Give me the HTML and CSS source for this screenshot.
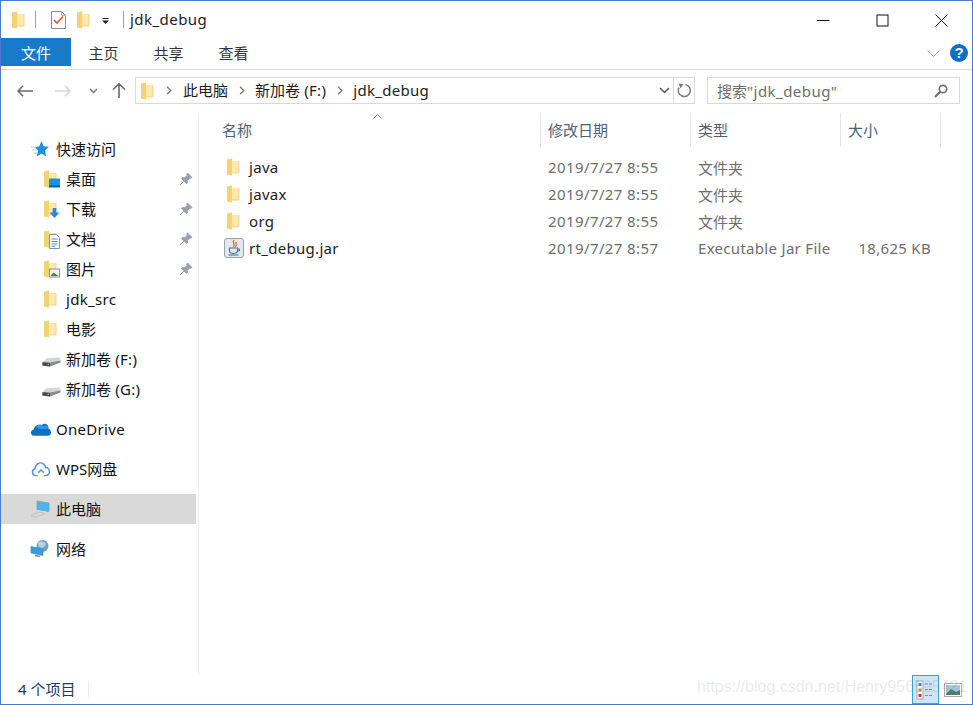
FILE: index.html
```html
<!DOCTYPE html>
<html lang="zh-CN">
<head>
<meta charset="utf-8">
<title>jdk_debug</title>
<link rel="stylesheet" href="styles.css">
</head>
<body>
<svg class="defs" width="0" height="0" aria-hidden="true">
  <defs>
    <symbol id="folder" viewBox="0 0 13 18">
      <path d="M0 1.5 L5 0.5 L5 3 L12 3 L12 15 L5 15 L5 17.5 L0 16.5 Z" fill="#fde9ae"/>
      <path d="M0 1.5 L5 0.5 L5 17.5 L0 16.5 Z" fill="#f5d272"/>
      <path d="M5 15 L12 15 L12 3" fill="none" stroke="#eccb72" stroke-width="0.8"/>
    </symbol>
    <symbol id="pin" viewBox="0 0 14 14">
      <path d="M8.5 1 L13 5.5 L11.7 6.3 L10.8 6 L8.3 8.5 L8.5 10.8 L7.4 11.5 L2.6 6.6 L3.4 5.5 L5.7 5.8 L8.2 3.3 L7.8 2.2 Z M4.8 9.2 L1 13" fill="#98a2ab" stroke="#98a2ab"/>
    </symbol>
    <symbol id="drive" viewBox="0 0 19 10">
      <path d="M0.5 5 L5 1 L18 0.5 L18.5 4 L8 9 L1 9 Z" fill="#d6d6d6"/>
      <path d="M0.5 5 L8 5.6 L18.5 3.5 L18.5 5.5 L8 9.5 L0.5 8.5 Z" fill="#8a8a8a"/>
      <path d="M0.5 5.3 L8 6 L8 9.5 L0.5 8.5 Z" fill="#4b4b4b"/>
      <rect x="5.5" y="6.8" width="1.6" height="1.2" fill="#5ec45e"/>
    </symbol>
  </defs>
</svg>
<div class="window">
  <header class="titlebar">
    <svg class="ico folder-sm qa-first"><use href="#folder"/></svg>
    <span class="vsep sep-a"></span>
    <svg class="ico check" viewBox="0 0 15 18">
      <path d="M0.5 0.5 H10.5 L14.5 4.5 V17.5 H0.5 Z" fill="#fff" stroke="#8c8c8c"/>
      <path d="M10.5 0.5 V4.5 H14.5" fill="none" stroke="#b5b5b5"/>
      <path d="M3 9 L6 12 L12 5.5" fill="none" stroke="#e4572a" stroke-width="1.6"/>
    </svg>
    <svg class="ico folder-sm qa-third"><use href="#folder"/></svg>
    <svg class="ico qa-drop" viewBox="0 0 7 6"><rect x="0.5" width="6" height="1" fill="#222"/><path d="M0 2.5 H7 L3.5 6 Z" fill="#222"/></svg>
    <span class="vsep sep-b"></span>
    <span class="wintitle">jdk_debug</span>
    <div class="controls">
      <svg class="ico ctl" viewBox="0 0 13 13"><path d="M0 6.5 H12.5" stroke="#111" fill="none"/></svg>
      <svg class="ico ctl" viewBox="0 0 13 13"><rect x="1" y="1" width="11" height="11" fill="none" stroke="#111"/></svg>
      <svg class="ico ctl" viewBox="0 0 13 13"><path d="M0.5 0.5 L12.5 12.5 M12.5 0.5 L0.5 12.5" stroke="#111" fill="none"/></svg>
    </div>
  </header>

  <nav class="ribbon">
    <span class="tab tab-file">文件</span>
    <span class="tab">主页</span>
    <span class="tab">共享</span>
    <span class="tab">查看</span>
    <svg class="ico rib-chev" viewBox="0 0 13 7"><path d="M0.5 0.5 L6.5 6.5 L12.5 0.5" fill="none" stroke="#b4b4b4"/></svg>
    <span class="help">?</span>
  </nav>

  <div class="addressrow">
    <div class="navbtns">
      <svg class="ico nav-back" viewBox="0 0 16 12"><path d="M6 0.8 L1 6 L6 11.2 M1 6 H16" fill="none" stroke="#6a6a6a" stroke-width="1.6"/></svg>
      <svg class="ico nav-fwd" viewBox="0 0 16 12"><path d="M10 0.8 L15 6 L10 11.2 M15 6 H0" fill="none" stroke="#d6d6d6" stroke-width="1.6"/></svg>
      <svg class="ico nav-down" viewBox="0 0 9 6"><path d="M1 1 L4.5 4.5 L8 1" fill="none" stroke="#777" stroke-width="1.5"/></svg>
      <svg class="ico nav-up" viewBox="0 0 14 15"><path d="M1 6.5 L7 0.8 L13 6.5 M7 1 V15" fill="none" stroke="#6a6a6a" stroke-width="1.6"/></svg>
    </div>
    <div class="addressbox">
      <div class="crumbs">
        <svg class="ico folder-sm"><use href="#folder"/></svg>
        <svg class="ico crumb-sep" viewBox="0 0 6 9"><path d="M1 0.8 L4.8 4.5 L1 8.2" fill="none" stroke="#777" stroke-width="1.3"/></svg>
        <span class="crumb">此电脑</span>
        <svg class="ico crumb-sep" viewBox="0 0 6 9"><path d="M1 0.8 L4.8 4.5 L1 8.2" fill="none" stroke="#777" stroke-width="1.3"/></svg>
        <span class="crumb">新加卷<span class="lat"> (F:)</span></span>
        <svg class="ico crumb-sep" viewBox="0 0 6 9"><path d="M1 0.8 L4.8 4.5 L1 8.2" fill="none" stroke="#777" stroke-width="1.3"/></svg>
        <span class="crumb lat">jdk_debug</span>
      </div>
      <span class="addr-drop"><svg class="ico addr-chev" viewBox="0 0 11 7"><path d="M1 1 L5.5 5.5 L10 1" fill="none" stroke="#555" stroke-width="1.5"/></svg></span>
      <span class="addr-refresh"><svg class="ico refresh" viewBox="0 0 15 15"><path d="M4 2.6 A6 6 0 1 0 11 2.6" fill="none" stroke="#7c7c7c" stroke-width="1.5" transform="rotate(-25 7.5 8)"/><path d="M1.5 0.5 L6.5 1 L3.5 5.5 Z" fill="#7c7c7c"/></svg></span>
    </div>
    <div class="searchbox">
      <span class="search-text">搜索<span class="lat-wide">"jdk_debug"</span></span>
      <svg class="ico search-ico" viewBox="0 0 14 14"><circle cx="9" cy="5" r="3.7" fill="none" stroke="#6e6e6e" stroke-width="1.7"/><path d="M6.2 7.8 L1 13" stroke="#6e6e6e" stroke-width="2" fill="none"/></svg>
    </div>
  </div>

  <div class="body">
    <aside class="sidebar">
      <ul class="tree">
        <li class="item lvl1">
          <svg class="ico nav-ico" viewBox="0 0 18 18"><path d="M10.5 1 L12.6 6.3 L18 6.8 L14 10.5 L15.2 16.5 L10.5 13.4 L5.8 16.5 L7 10.5 L4 7.5 L8.3 6.3 Z" fill="#1f8fe0"/><path d="M0 7 H5 M1 10 H6 M2 13 H6" stroke="#a8d6f5" fill="none"/></svg>
          <span>快速访问</span>
        </li>
        <li class="item lvl2">
          <span class="sub-ico"><svg class="ico folder-sm"><use href="#folder"/></svg><svg class="ico badge" viewBox="0 0 11 9"><rect width="11" height="8" fill="#1f8fe0"/><rect y="7" width="11" height="2" fill="#0d5fa8"/></svg></span>
          <span class="grow">桌面</span><svg class="ico pin"><use href="#pin"/></svg>
        </li>
        <li class="item lvl2">
          <span class="sub-ico"><svg class="ico folder-sm"><use href="#folder"/></svg><svg class="ico badge" viewBox="0 0 11 11"><path d="M3.5 0 H7.5 V5 H11 L5.5 11 L0 5 H3.5 Z" fill="#2f86d6"/></svg></span>
          <span class="grow">下载</span><svg class="ico pin"><use href="#pin"/></svg>
        </li>
        <li class="item lvl2">
          <span class="sub-ico"><svg class="ico folder-sm"><use href="#folder"/></svg><svg class="ico badge doc" viewBox="0 0 11 15"><path d="M0.5 0.5 H7.5 L10.5 3.5 V14.5 H0.5 Z" fill="#fff" stroke="#8f8f8f"/><path d="M2.5 5 H8.5 M2.5 7.5 H8.5 M2.5 10 H8.5 M2.5 12.3 H6" stroke="#3f8fd0"/></svg></span>
          <span class="grow">文档</span><svg class="ico pin"><use href="#pin"/></svg>
        </li>
        <li class="item lvl2">
          <span class="sub-ico"><svg class="ico folder-sm"><use href="#folder"/></svg><svg class="ico badge" viewBox="0 0 11 9"><rect x="0.5" y="0.5" width="10" height="8" fill="#eef4f8" stroke="#8f8f8f"/><path d="M1.5 7.5 L4.5 4 L9.5 7.5 Z" fill="#4f7d5a"/></svg></span>
          <span class="grow">图片</span><svg class="ico pin"><use href="#pin"/></svg>
        </li>
        <li class="item lvl2">
          <span class="sub-ico"><svg class="ico folder-sm"><use href="#folder"/></svg></span>
          <span class="grow latin-row lat">jdk_src</span>
        </li>
        <li class="item lvl2">
          <span class="sub-ico"><svg class="ico folder-sm"><use href="#folder"/></svg></span>
          <span class="grow">电影</span>
        </li>
        <li class="item lvl2">
          <span class="sub-ico"><svg class="ico drive"><use href="#drive"/></svg></span>
          <span class="grow">新加卷<span class="lat"> (F:)</span></span>
        </li>
        <li class="item lvl2">
          <span class="sub-ico"><svg class="ico drive"><use href="#drive"/></svg></span>
          <span class="grow">新加卷<span class="lat"> (G:)</span></span>
        </li>
        <li class="item lvl1 gap">
          <svg class="ico nav-ico wide" viewBox="0 0 21 14"><path d="M4 13.5 C0.5 13.5 -0.5 8.5 3.5 7.5 C4.5 3 9 2 11 4 C13 0.5 18 2 17.5 6.5 C20.5 7 21.5 13.5 17 13.5 Z" fill="#0f6fc6"/><path d="M6 5 C8 2 11 2 12.5 4.5 C15 3 17.5 4.5 17.5 6.5 L9 7 Z" fill="#2f9be8"/></svg>
          <span class="latin-row lat">OneDrive</span>
        </li>
        <li class="item lvl1 gap">
          <svg class="ico nav-ico wide" viewBox="0 0 21 17"><path d="M5 15.5 C1 15.5 0 9.5 4 8.5 C4.5 3 9.5 0.5 13 3 C15.5 4.5 15.5 6 15.5 7 C20 6.5 21.5 15.5 15.5 15.5 H13.5 M5 15.5 H7 M7.5 12.5 L10.5 9.5 L13.5 12.5" fill="none" stroke="#4f8fe8" stroke-width="1.5"/></svg>
          <span>WPS网盘</span>
        </li>
        <li class="item lvl1 gap selected">
          <svg class="ico nav-ico" viewBox="0 0 20 18"><path d="M7 1 L19 3 V11.5 L7 9.5 Z" fill="#49b8ef" stroke="#7b99ad" stroke-width="0.7"/><path d="M1 15.5 L9 12 L15 13.5 L6 17.5 Z" fill="none" stroke="#bbb" stroke-width="0.8"/></svg>
          <span>此电脑</span>
        </li>
        <li class="item lvl1 gap">
          <svg class="ico nav-ico" viewBox="0 0 20 18"><circle cx="12.5" cy="6" r="6" fill="#6f9fc2"/><path d="M8 3 C10 1 14 1 16 4 L13 8 L9 7 Z" fill="#b6d4e6"/><path d="M1 6.5 L13 9 V15.5 L1 13 Z" fill="#2f9fe0" stroke="#5c8aa6" stroke-width="0.7"/><path d="M5 15.5 L10 16.5" stroke="#8a8a8a" stroke-width="1.4"/></svg>
          <span>网络</span>
        </li>
      </ul>
    </aside>

    <main class="content">
      <div class="columns">
        <span class="col col-name">名称<svg class="ico sort" viewBox="0 0 9 5"><path d="M0.5 4.5 L4.5 0.5 L8.5 4.5" fill="none" stroke="#8a8a8a"/></svg></span>
        <span class="col col-date">修改日期</span>
        <span class="col col-type">类型</span>
        <span class="col col-size">大小</span>
      </div>
      <div class="files">
        <div class="file">
          <span class="fname"><svg class="ico folder-sm"><use href="#folder"/></svg><span class="lat">java</span></span>
          <span class="fdate">2019/7/27 8:55</span><span class="ftype">文件夹</span><span class="fsize"></span>
        </div>
        <div class="file">
          <span class="fname"><svg class="ico folder-sm"><use href="#folder"/></svg><span class="lat">javax</span></span>
          <span class="fdate">2019/7/27 8:55</span><span class="ftype">文件夹</span><span class="fsize"></span>
        </div>
        <div class="file">
          <span class="fname"><svg class="ico folder-sm"><use href="#folder"/></svg><span class="lat">org</span></span>
          <span class="fdate">2019/7/27 8:55</span><span class="ftype">文件夹</span><span class="fsize"></span>
        </div>
        <div class="file">
          <span class="fname"><svg class="ico jar" viewBox="0 0 20 20"><rect x="0.5" y="0.5" width="19" height="19" rx="2.5" fill="#e4e8ec" stroke="#9aa3ab"/><path d="M10 2 C7.5 5 12 6 9.5 9 M12.5 4 C11 6 13.5 6.5 11.5 9" fill="none" stroke="#e0662a" stroke-width="1.3"/><path d="M5.5 10 H13.5 V13 C13.5 15 11.5 15.5 9.5 15.5 C7.5 15.5 5.5 15 5.5 13 Z" fill="none" stroke="#50718c" stroke-width="1.1"/><path d="M13.5 11 H15.5 V13 H13.5 M4.5 17 H14.5" fill="none" stroke="#50718c"/></svg><span class="lat">rt_debug.jar</span></span>
          <span class="fdate">2019/7/27 8:57</span><span class="ftype lat">Executable Jar File</span><span class="fsize lat">18,625 KB</span>
        </div>
      </div>
    </main>
  </div>

  <footer class="statusbar">
    <span class="count">4 个项目</span>
    <span class="viewbtn active"><svg class="ico" width="19" height="20" viewBox="0 0 19 20"><rect x="1" y="1" width="6" height="18" fill="#fff" stroke="#a8a8a8"/><rect x="2.5" y="3" width="3" height="3" fill="#3f7fc0"/><rect x="2.5" y="8.5" width="3" height="3" fill="#b09a30"/><rect x="2.5" y="14" width="3" height="3" fill="#c0392b"/><path d="M9 4 H17 M9 9.5 H17 M9 15.5 H17" stroke="#8a8a8a" stroke-dasharray="3 1"/></svg></span>
    <span class="viewbtn"><svg class="ico" width="18" height="14" viewBox="0 0 18 14"><rect x="0.5" y="0.5" width="17" height="13" fill="#fff" stroke="#a8a8a8"/><rect x="2" y="2" width="14" height="10" fill="#9fc7e2"/><path d="M2 11 L7 6 L12 9 L16 7 V12 H2 Z" fill="#4f7d6a"/></svg></span>
  </footer>

  <div class="watermark">https://blog.csdn.net/Henry956595421</div>
</div>
</body>
</html>
```

FILE: styles.css
```css
* { box-sizing: border-box; }
html, body { margin: 0; padding: 0; background: #fff; }
body {
  font-family: "Noto Sans", "Noto Sans CJK SC", sans-serif;
  font-size: 15px;
  color: #1a1a1a;
}
.defs { position: absolute; }
.ico { display: block; flex: none; }
.folder-sm { width: 13px; height: 18px; }
.lat { letter-spacing: 0.3px; }
.lat-wide { letter-spacing: 0.45px; }

.window {
  position: relative;
  width: 973px;
  height: 705px;
  border: 1px solid #4a78cf;
  display: flex;
  flex-direction: column;
  overflow: hidden;
  background: #fff;
}

/* Title bar */
.titlebar {
  height: 37px;
  display: flex;
  align-items: center;
  padding-left: 11px;
  flex: none;
}
.vsep { width: 1px; height: 17px; background: #a0a0a0; flex: none; }
.sep-a { margin-left: 10px; }
.check { width: 15px; height: 18px; margin-left: 15px; }
.qa-third { margin-left: 11px; }
.qa-drop { width: 7px; height: 6px; margin-left: 12px; margin-top: 3px; }
.sep-b { margin-left: 14px; }
.wintitle { margin-left: 6px; padding-bottom: 2px; color: #1c1c1c; letter-spacing: 0.45px; }
.controls {
  margin-left: auto;
  margin-right: 24px;
  display: flex;
  gap: 46px;
  margin-top: 1px;
}
.ctl { width: 13px; height: 13px; }

/* Ribbon tabs */
.ribbon {
  height: 32px;
  flex: none;
  display: flex;
  align-items: flex-start;
  border-bottom: 1px solid #dcdcdc;
  position: relative;
}
.tab {
  width: 65px;
  height: 28px;
  line-height: 30px;
  text-align: center;
  color: #333;
}
.tab-file {
  width: 70px;
  background: #1979ca;
  color: #fff;
}
.rib-chev { width: 13px; height: 7px; margin-left: auto; margin-top: 12px; }
.help {
  width: 18px;
  height: 18px;
  margin: 6px 4px 0 10px;
  border-radius: 50%;
  background: #0a6fc9;
  color: #fff;
  font: 700 15px/18px "Liberation Sans", sans-serif;
  text-align: center;
}

/* Address row */
.addressrow {
  height: 43px;
  flex: none;
  display: flex;
  align-items: flex-start;
  padding-top: 7px;
}
.navbtns {
  width: 134px;
  height: 27px;
  flex: none;
  display: flex;
  align-items: center;
  padding-left: 16px;
}
.nav-back, .nav-fwd { width: 16px; height: 12px; }
.nav-fwd { margin-left: 22px; }
.nav-down { width: 9px; height: 6px; margin-left: 18px; }
.nav-up { width: 14px; height: 15px; margin-left: 14px; }
.addressbox {
  width: 560px;
  height: 27px;
  border: 1px solid #d9d9d9;
  display: flex;
  align-items: center;
  flex: none;
}
.crumbs { flex: 1; display: flex; align-items: center; padding-left: 5px; }
.crumb { color: #1c1c1c; white-space: nowrap; padding-bottom: 2px; }
.crumb-sep { width: 6px; height: 9px; margin: 0 10px 0 11px; }
.crumbs .folder-sm + .crumb-sep { margin-left: 12px; margin-right: 11px; }
.addr-drop { width: 16px; height: 100%; display: flex; align-items: center; }
.addr-chev { width: 11px; height: 7px; margin-left: 2px; }
.addr-refresh {
  width: 21px;
  height: 100%;
  border-left: 1px solid #d9d9d9;
  display: flex;
  align-items: center;
  justify-content: center;
}
.refresh { width: 15px; height: 15px; }
.searchbox {
  width: 253px;
  height: 27px;
  margin-left: 12px;
  border: 1px solid #d9d9d9;
  display: flex;
  align-items: center;
  justify-content: space-between;
  padding: 0 11px 0 9px;
  flex: none;
}
.search-text { color: #6d6d6d; white-space: nowrap; }
.search-ico { width: 14px; height: 14px; }

/* Body */
.body { flex: 1; display: flex; min-height: 0; }
.sidebar {
  width: 198px;
  flex: none;
  border-right: 1px solid #f0f0f0;
  padding-top: 21px;
}
.tree { list-style: none; margin: 0; padding: 0; }
.item {
  height: 30px;
  width: 195px;
  display: flex;
  align-items: center;
  white-space: nowrap;
  color: #111;
}
.item.gap { margin-top: 10px; }
.lvl1 { padding-left: 29px; }
.lvl2 { padding-left: 43px; }
.nav-ico { width: 20px; height: 18px; margin-right: 6px; }
.nav-ico.wide { width: 22px; height: 16px; margin-right: 4px; }
.lvl1 > span { display: block; padding-bottom: 2px; }
.grow { flex: 1; padding-bottom: 2px; }
.lvl1 > .latin-row, .lvl2 > .latin-row { padding-bottom: 0; }
.selected { background: #d9d9d9; }
.sub-ico {
  width: 22px;
  height: 18px;
  position: relative;
  display: flex;
  align-items: center;
  flex: none;
}
.badge { position: absolute; left: 5px; bottom: 0; width: 11px; height: 10px; }
.badge.doc { height: 15px; bottom: -1px; }
.drive { width: 19px; height: 10px; margin-left: -2px; margin-top: 5px; }
.pin { width: 14px; height: 14px; margin-right: 3px; }

/* Content */
.content { flex: 1; min-width: 0; display: flex; flex-direction: column; }
.columns {
  height: 34px;
  flex: none;
  display: grid;
  grid-template-columns: 342px 150px 150px 100px;
}
.col {
  border-right: 1px solid #e5e5e5;
  padding-left: 7px;
  line-height: 34px;
  color: #4c607a;
  position: relative;
}
.col-name { padding-left: 23px; }
.sort { position: absolute; left: 174px; top: 1px; width: 9px; height: 5px; }
.files { padding-top: 8px; }
.file {
  height: 27px;
  display: grid;
  grid-template-columns: 342px 150px 141px 99px;
  align-items: center;
  color: #6d6d6d;
  white-space: nowrap;
  padding-bottom: 3px;
}
.fname { display: flex; align-items: center; padding-left: 28px; color: #1c1c1c; }
.fname span { margin-left: 9px; }
.jar { width: 20px; height: 20px; margin-left: -3px; margin-right: -4px; }
.fdate { padding-left: 7px; letter-spacing: 0.4px; }
.ftype { padding-left: 7px; }
.fsize { text-align: right; }

/* Status bar */
.statusbar {
  height: 30px;
  flex: none;
  display: flex;
  align-items: center;
  padding-left: 17px;
}
.count {
  width: 71px;
  border-right: 1px solid #ececec;
  color: #1e3a66;
  line-height: 16px;
  margin-right: auto;
}
.viewbtn {
  width: 27px;
  height: 29px;
  display: flex;
  align-items: center;
  justify-content: center;
  margin-top: 1px;
}
.viewbtn.active {
  background: #cde6f7;
  border: 1px solid #3aa0dc;
}
.viewbtn:last-child { margin-right: 6px; }

.watermark {
  position: absolute;
  left: 696px;
  top: 676px;
  font: 16px/20px "Liberation Sans", sans-serif;
  color: rgba(120, 120, 120, 0.17);
  white-space: nowrap;
}
```
